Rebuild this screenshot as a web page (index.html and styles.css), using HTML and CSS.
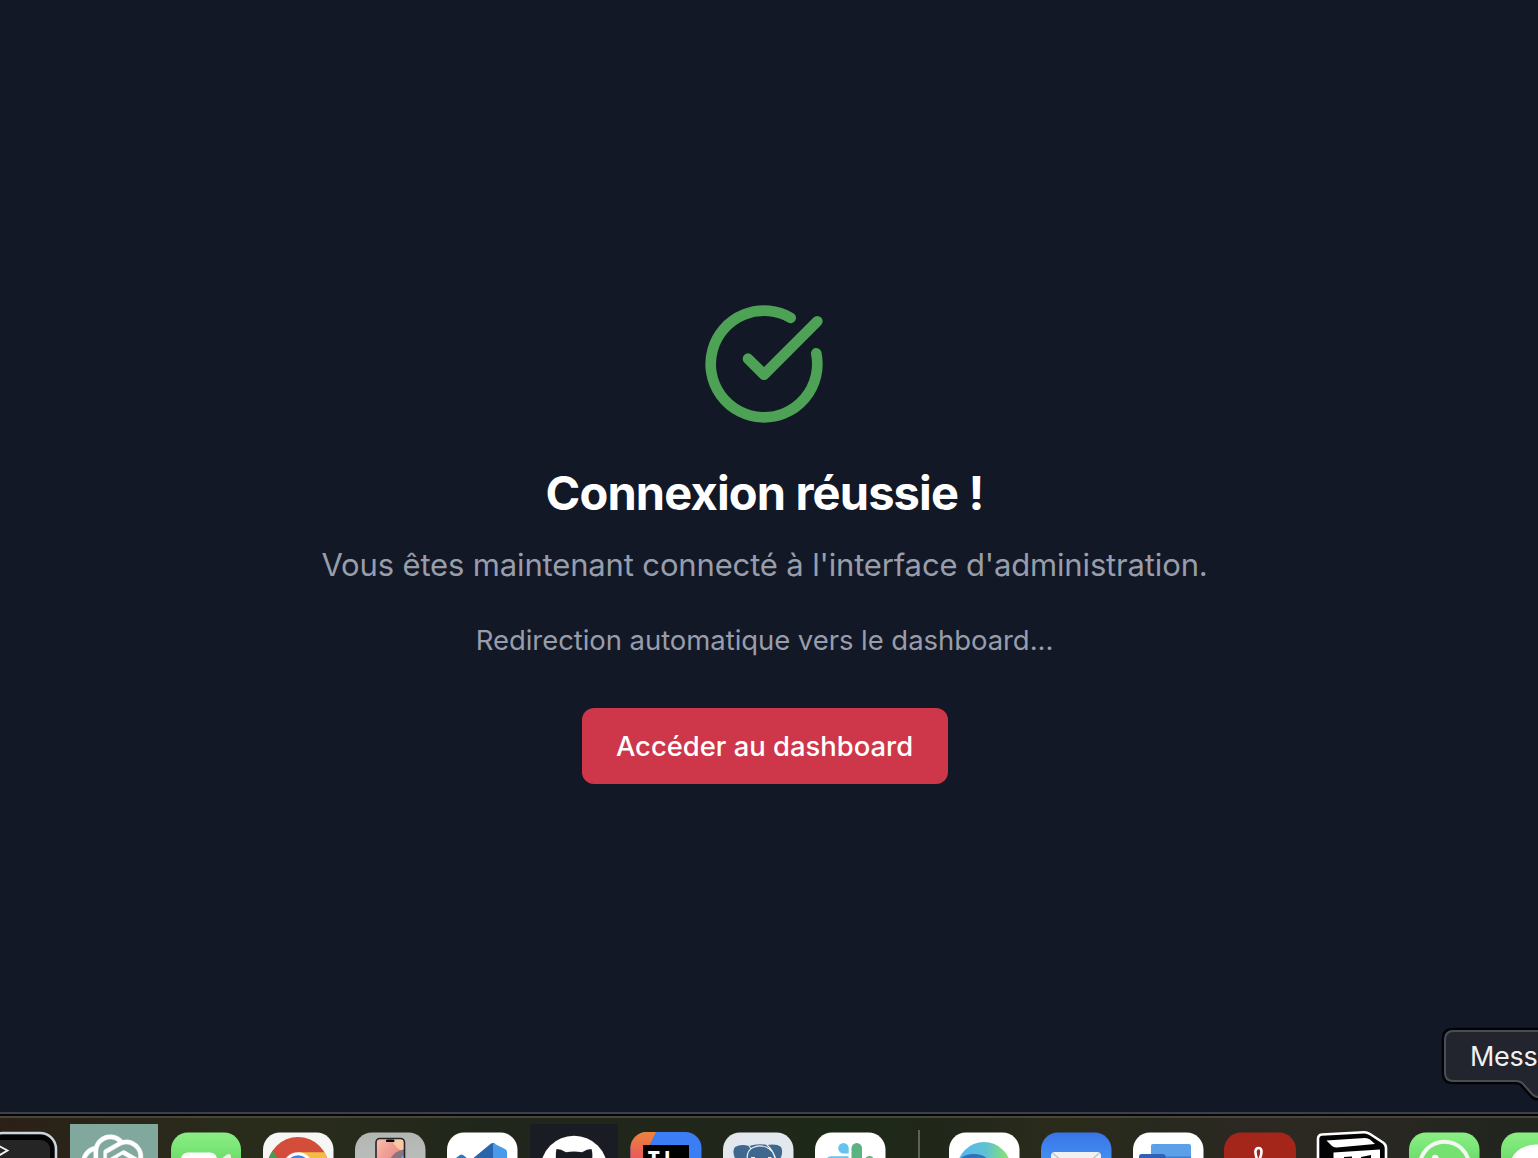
FILE: index.html
```html
<!DOCTYPE html>
<html lang="fr">
<head>
<meta charset="utf-8">
<title>Connexion réussie</title>
<link rel="stylesheet" href="styles.css">
</head>
<body>
<main class="success">
  <svg class="success-icon" viewBox="0 0 24 24" fill="none" stroke="currentColor" stroke-width="2" stroke-linecap="round" stroke-linejoin="round"><path d="M21.801 10A10 10 0 1 1 17 3.335"/><path d="m9 11 3 3L22 4"/></svg>
  <h1 class="title">Connexion réussie !</h1>
  <p class="lead">Vous êtes maintenant connecté à l'interface d'administration.</p>
  <p class="note">Redirection automatique vers le dashboard...</p>
  <button class="button" type="button">Accéder au dashboard</button>
</main>

<div class="tooltip">
  <svg class="tooltip-shape" viewBox="1440 1024 98 80">
    <path d="M1560 1029H1453Q1443 1029 1443 1039V1073Q1443 1083 1453 1083H1515Q1520 1083 1523 1087L1531 1096Q1534 1100 1538 1099H1560Z" fill="#22252e" stroke="#020305" stroke-width="2.5"/>
    <path d="M1560 1031H1453.500Q1445 1031 1445 1039.500V1072.500Q1445 1081 1453.500 1081H1516Q1521 1081 1524 1085L1532 1094Q1535 1097 1538 1097H1560" fill="none" stroke="#4b4d55" stroke-width="2"/>
  </svg>
  <span class="tooltip-text">Mess</span>
</div>

<nav class="dock">
  <svg class="app" viewBox="-24 1118 92 40">
    <rect x="-13" y="1133" width="69" height="69" rx="16" fill="#111" stroke="#cbd6df" stroke-width="2.500"/>
    <rect x="-11" y="1135" width="65" height="66" rx="14" fill="#030303"/>
    <rect x="-9" y="1140" width="59" height="60" rx="9" fill="#252526"/>
    <path d="M-2 1145.500L7.500 1150.500L-2 1156" fill="none" stroke="#f4f4f4" stroke-width="1.800"/>
  </svg>
  <svg class="app" viewBox="68 1118 92 40">
    <path d="M70 1124h88v40H70z" fill="#80a89d"/>
    <path transform="translate(80.800 1134.700) scale(2.750)" fill="#fff" stroke="#fff" stroke-width=".15" d="M22.2819 9.8211a5.9847 5.9847 0 0 0-.5157-4.9108 6.0462 6.0462 0 0 0-6.5098-2.9A6.0651 6.0651 0 0 0 4.9807 4.1818a5.9847 5.9847 0 0 0-3.9977 2.9 6.0462 6.0462 0 0 0 .7427 7.0966 5.98 5.98 0 0 0 .511 4.9107 6.051 6.051 0 0 0 6.5146 2.9001A5.9847 5.9847 0 0 0 13.2599 24a6.0557 6.0557 0 0 0 5.7718-4.2058 5.9894 5.9894 0 0 0 3.9977-2.9001 6.0557 6.0557 0 0 0-.7475-7.0729zm-9.022 12.6081a4.4755 4.4755 0 0 1-2.8764-1.0408l.1419-.0804 4.7783-2.7582a.7948.7948 0 0 0 .3927-.6813v-6.7369l2.02 1.1686a.071.071 0 0 1 .038.052v5.5826a4.504 4.504 0 0 1-4.4945 4.4944zm-9.6607-4.1254a4.4708 4.4708 0 0 1-.5346-3.0137l.142.0852 4.783 2.7582a.7712.7712 0 0 0 .7806 0l5.8428-3.3685v2.3324a.0804.0804 0 0 1-.0332.0615L9.74 19.9502a4.4992 4.4992 0 0 1-6.1408-1.6464zM2.3408 7.8956a4.485 4.485 0 0 1 2.3655-1.9728V11.6a.7664.7664 0 0 0 .3879.6765l5.8144 3.3543-2.0201 1.1685a.0757.0757 0 0 1-.071 0l-4.8303-2.7865A4.504 4.504 0 0 1 2.3408 7.872zm16.5963 3.8558L13.1038 8.364 15.1192 7.2a.0757.0757 0 0 1 .071 0l4.8303 2.7913a4.4944 4.4944 0 0 1-.6765 8.1042v-5.6772a.79.79 0 0 0-.407-.667zm2.0107-3.0231l-.142-.0852-4.7735-2.7818a.7759.7759 0 0 0-.7854 0L9.409 9.2297V6.8974a.0662.0662 0 0 1 .0284-.0615l4.8303-2.7866a4.4992 4.4992 0 0 1 6.6802 4.66zM8.3065 12.863l-2.02-1.1638a.0804.0804 0 0 1-.038-.0567V6.0742a4.4992 4.4992 0 0 1 7.3757-3.4537l-.142.0805L8.704 5.459a.7948.7948 0 0 0-.3927.6813zm1.0976-2.3654l2.602-1.4998 2.6069 1.4998v2.9994l-2.5974 1.4997-2.6067-1.4997Z"/>
  </svg>
  <svg class="app" viewBox="160 1118 92 40">
    <defs><linearGradient id="green" x1="0" y1="0" x2="0" y2="1"><stop offset="0" stop-color="#8bef83"/><stop offset="1" stop-color="#3fc24a"/></linearGradient></defs>
    <rect x="171" y="1132.500" width="70" height="70" rx="17" fill="url(#green)"/>
    <rect x="181" y="1152.500" width="36" height="30" rx="7" fill="#fff"/>
    <path d="M220 1160L227 1154.500Q231 1153 231 1157V1178L220 1172Z" fill="#e9f8e8"/>
  </svg>
  <svg class="app" viewBox="252 1118 92 40">
    <rect x="263" y="1132.500" width="70.500" height="70" rx="17" fill="#f6f6f4"/>
    <circle cx="298" cy="1167.500" r="30.500" fill="#d44c3a"/>
    <path d="M273 1150.500L283 1168H267Q267 1158 273 1150.500Z" fill="#459d56"/>
    <path d="M298 1152.300H324.500Q328 1158 328.500 1168H298Z" fill="#f2bd42"/>
    <circle cx="298" cy="1167.500" r="15.300" fill="#fff"/>
    <circle cx="298" cy="1167.500" r="12.300" fill="#4a7fe6"/>
  </svg>
  <svg class="app" viewBox="344 1118 92 40">
    <defs>
      <linearGradient id="tile" x1="0" y1="0" x2="0" y2="1"><stop offset="0" stop-color="#b2b6b3"/><stop offset="1" stop-color="#c6c9c7"/></linearGradient>
      <linearGradient id="screen" x1="0" y1="0" x2="1" y2="1"><stop offset="0" stop-color="#f8c6a8"/><stop offset=".35" stop-color="#f19e96"/><stop offset="1" stop-color="#dc7b77"/></linearGradient>
      <clipPath id="phone"><rect x="376.500" y="1139" width="27.500" height="50" rx="3.500"/></clipPath>
    </defs>
    <rect x="355" y="1132.500" width="70.500" height="70" rx="17" fill="url(#tile)"/>
    <g clip-path="url(#phone)">
      <path d="M376 1138h29v40h-29z" fill="url(#screen)"/>
      <path d="M405 1138V1151Q396 1151 391 1138Z" fill="#f7c9a4"/>
      <path d="M405 1149Q391 1152 389 1163H405Z" fill="#8b7484"/>
      <path d="M405 1154L399 1160H405Z" fill="#52c4e2"/>
    </g>
    <rect x="376" y="1138.500" width="28.500" height="50" rx="4" fill="none" stroke="#292527" stroke-width="1.600"/>
    <rect x="386" y="1139.500" width="8.500" height="2.600" rx="1.200" fill="#080808"/>
  </svg>
  <svg class="app" viewBox="436 1118 92 40">
    <rect x="447" y="1132.500" width="70.500" height="70" rx="17" fill="#fff"/>
    <path d="M456 1158L460 1155Q461.500 1154.200 463 1155L468 1159H456Z" fill="#2d75b9"/>
    <path d="M471 1160L491 1143.500Q493 1142.500 495 1143.500V1160Z" fill="#2865aa"/>
    <path d="M493 1143L505 1149Q507 1150 507 1152V1160H493Z" fill="#4a9aea"/>
  </svg>
  <svg class="app" viewBox="528 1118 92 40">
    <path d="M530 1124h88v40h-88z" fill="#191c22"/>
    <circle cx="574" cy="1169.300" r="33.500" fill="#fff"/>
    <path d="M556 1160Q555.500 1153 556.500 1149Q561 1149 566 1152.300Q574 1150.500 582 1152.300Q587 1149 591.500 1149Q593 1154 592 1160Z" fill="#171a20"/>
  </svg>
  <svg class="app" viewBox="620 1118 92 40">
    <defs>
      <clipPath id="ij"><rect x="630.500" y="1132" width="71" height="70" rx="16"/></clipPath>
      <linearGradient id="flame" x1="0" y1="0" x2="0" y2="1"><stop offset="0" stop-color="#ed8438"/><stop offset="1" stop-color="#e9585d"/></linearGradient>
      <linearGradient id="sea" x1="0" y1="0" x2="1" y2="0"><stop offset="0" stop-color="#7862c0"/><stop offset=".35" stop-color="#3a7df5"/></linearGradient>
    </defs>
    <g clip-path="url(#ij)">
      <path d="M630 1132h72v40h-72z" fill="url(#sea)"/>
      <path d="M630 1132h26l-13 27h-13z" fill="url(#flame)"/>
    </g>
    <path d="M643 1145h46v20h-46z" fill="#000"/>
    <text x="646.200" y="1167.500" class="ij-mark">I</text><text x="657" y="1168" class="ij-mark ij-mark-j">J</text>
  </svg>
  <svg class="app" viewBox="712 1118 92 40">
    <rect x="723" y="1132.500" width="70.500" height="70" rx="17" fill="#e3e8ef"/>
    <path d="M737 1162Q731 1152 735 1147Q741 1143.500 749 1146Q758 1143 767 1145Q777 1143.500 781 1147Q784 1152 779 1162Z" fill="#40688f"/>
    <path d="M747.500 1160Q746 1151 753 1147.500Q759 1144.500 766 1147Q773 1150 775 1158M749 1146L751 1148.500M767 1145Q772 1149 775.500 1158" fill="none" stroke="#e8eff5" stroke-width="1.200"/>
    <path d="M751 1157.500h4M768 1157.500h3.500" stroke="#e8eff5" stroke-width="1"/>
  </svg>
  <svg class="app" viewBox="804 1118 92 40">
    <rect x="815" y="1132.500" width="70.500" height="70" rx="17" fill="#fff"/>
    <path d="M843.500 1143a5.300 5.300 0 0 0 0 10.600H848.700V1148.300A5.300 5.300 0 0 0 843.500 1143Z" fill="#67c3eb"/>
    <rect x="851.500" y="1143" width="10.500" height="26" rx="5.200" fill="#5bb381"/>
    <path d="M826 1160Q827 1156.300 831 1156.300H848.500V1160Z" fill="#67c3eb"/>
    <path d="M865 1160Q865.500 1156 869.500 1156Q873.500 1156 874 1160Z" fill="#5bb381"/>
  </svg>
  <span class="dock-separator"></span>
  <svg class="app" viewBox="938 1118 92 40">
    <defs><linearGradient id="wave" x1="0" y1="0" x2="1" y2="0"><stop offset=".1" stop-color="#55b7ee"/><stop offset=".55" stop-color="#5fc2d1"/><stop offset=".9" stop-color="#82e078"/></linearGradient></defs>
    <rect x="949" y="1132.500" width="70.500" height="70" rx="17" fill="#fff"/>
    <circle cx="984" cy="1169" r="27" fill="url(#wave)"/>
    <path d="M958 1162Q962 1154 974 1154Q985 1154 990 1162Z" fill="#3071b9"/>
    <path d="M970 1162Q974 1156.500 981 1157.500L990 1162Z" fill="#3586ca"/>
  </svg>
  <svg class="app" viewBox="1030 1118 92 40">
    <defs><linearGradient id="sky" x1="0" y1="0" x2="0" y2="1"><stop offset="0" stop-color="#3974e9"/><stop offset="1" stop-color="#56b9fa"/></linearGradient></defs>
    <rect x="1041" y="1132.500" width="70.500" height="70" rx="17" fill="url(#sky)"/>
    <rect x="1051" y="1152" width="50" height="34" rx="4" fill="#f1f1f1"/>
    <path d="M1053 1153.500L1062 1161M1099 1153.500L1090 1161" stroke="#bfc1c3" stroke-width="1.300"/>
  </svg>
  <svg class="app" viewBox="1122 1118 92 40">
    <rect x="1133" y="1132.500" width="70.500" height="70" rx="17" fill="#fff"/>
    <rect x="1151" y="1144" width="40" height="30" rx="2" fill="#5ca1e8"/>
    <path d="M1160 1156.500h31v4h-31z" fill="#3d7bd1"/>
    <rect x="1139" y="1154" width="26.500" height="26" rx="2.500" fill="#2f61b7"/>
  </svg>
  <svg class="app" viewBox="1214 1118 92 40">
    <rect x="1224" y="1132.500" width="72" height="70" rx="17" fill="#a42519"/>
    <path d="M1258 1162Q1255 1154 1255.500 1151Q1256 1148 1258.500 1148Q1261.500 1148 1261.500 1151.500Q1261.500 1156 1258 1162" fill="none" stroke="#fff" stroke-width="2.600"/>
  </svg>
  <svg class="app" viewBox="1306 1118 92 40">
    <path d="M1318 1160V1139Q1318 1135 1322 1134.500L1364 1132.300Q1367 1132.200 1370 1134L1383 1142.500Q1386 1144.500 1386 1148V1160Z" fill="#030303" stroke="#fff" stroke-width="2.600"/>
    <path d="M1326.500 1140.500L1365 1138Q1368 1138 1370 1139.500L1375 1144L1337 1147.500Q1334 1147.500 1332 1146Z" fill="#fff"/>
    <path d="M1333.500 1160V1152.500L1380 1149.500V1160Z" fill="#fff"/>
    <path d="M1344 1160V1157L1352 1156.500V1160ZM1361 1157L1371 1155V1160H1361Z" fill="#030303"/>
  </svg>
  <svg class="app" viewBox="1398 1118 92 40">
    <rect x="1409" y="1132.500" width="70.500" height="70" rx="17" fill="url(#green)"/>
    <circle cx="1444.500" cy="1166.500" r="24.800" fill="#75e170" stroke="#f2f7f0" stroke-width="4"/>
    <path d="M1431.500 1161Q1431.500 1155 1435 1154.800Q1437.500 1154.500 1438.500 1157L1440 1161Z" fill="#fff"/>
  </svg>
  <svg class="app" viewBox="1490 1118 92 40">
    <rect x="1501" y="1132.500" width="70.500" height="70" rx="17" fill="url(#green)"/>
    <ellipse cx="1536" cy="1166" rx="26" ry="21.500" fill="#fff"/>
  </svg>
</nav>
</body>
</html>
```
FILE: styles.css
```css
* {
  box-sizing: border-box;
}

body {
  margin: 0;
  height: 1158px;
  overflow: hidden;
  display: flex;
  flex-direction: column;
  background: #121826;
  font-family: Inter, "Liberation Sans", sans-serif;
}

.success {
  flex: 1;
  display: flex;
  flex-direction: column;
  align-items: center;
  padding: 300px 9px 0 0;
}

.success-icon {
  width: 128px;
  height: 128px;
  flex: none;
  color: #4da255;
  margin-right: 1px;
}

.title {
  margin: 33px 0 0;
  font-size: 47px;
  line-height: 64px;
  font-weight: 700;
  letter-spacing: -0.85px;
  color: #fff;
  white-space: nowrap;
}

.lead {
  margin: 16px 0 0;
  font-size: 31px;
  line-height: 48px;
  letter-spacing: -0.15px;
  color: #989dab;
  white-space: nowrap;
}

.note {
  margin: 31px 0 0;
  font-size: 27.5px;
  line-height: 40px;
  letter-spacing: -0.06px;
  color: #989dab;
  white-space: nowrap;
}

.button {
  margin-top: 48px;
  width: 366px;
  height: 76px;
  padding: 0 0 1px;
  border: 0;
  border-radius: 12px;
  background: #ce364a;
  color: #fff;
  font-family: inherit;
  font-size: 27.4px;
  font-weight: 500;
  white-space: nowrap;
}

.tooltip {
  position: absolute;
  right: 0;
  bottom: 54px;
  width: 98px;
  height: 80px;
  overflow: hidden;
}

.tooltip-shape {
  display: block;
  width: 98px;
  height: 80px;
}

.tooltip-text {
  position: absolute;
  left: 30px;
  top: 17px;
  font-size: 27px;
  line-height: 32px;
  letter-spacing: -0.3px;
  color: #f1f1f2;
}

.dock {
  flex: none;
  height: 46px;
  display: flex;
  padding-top: 2px;
  overflow: hidden;
  border-top: 2px solid #3b404b;
  background:
    linear-gradient(#45453b, #45453b) 0 2px / 100% 2px no-repeat,
    linear-gradient(#050605, #050605) 0 0 / 100% 2px no-repeat,
    linear-gradient(90deg, #2c2017 0, #2a2418 5%, #292b1b 14%, #292c1b 20%, #20261b 32%, #20271a 50%, #1d2918 54%, #21271a 62%, #2b2b1b 69%, #28291e 75%, #2c2822 84%, #292721 90%, #20251e 100%);
}

.app {
  flex: none;
  width: 92px;
  height: 40px;
  margin-top: 2px;
}

.app:first-child {
  margin-left: -24px;
}

.dock-separator {
  flex: none;
  width: 2px;
  height: 28px;
  margin: 14px 18px 0 22px;
  background: #5e6358;
}

.ij-mark {
  fill: #fff;
  font: 700 25px "Liberation Mono", monospace;
}

.ij-mark-j {
  font-family: Inter, sans-serif;
  font-size: 23px;
}
```
